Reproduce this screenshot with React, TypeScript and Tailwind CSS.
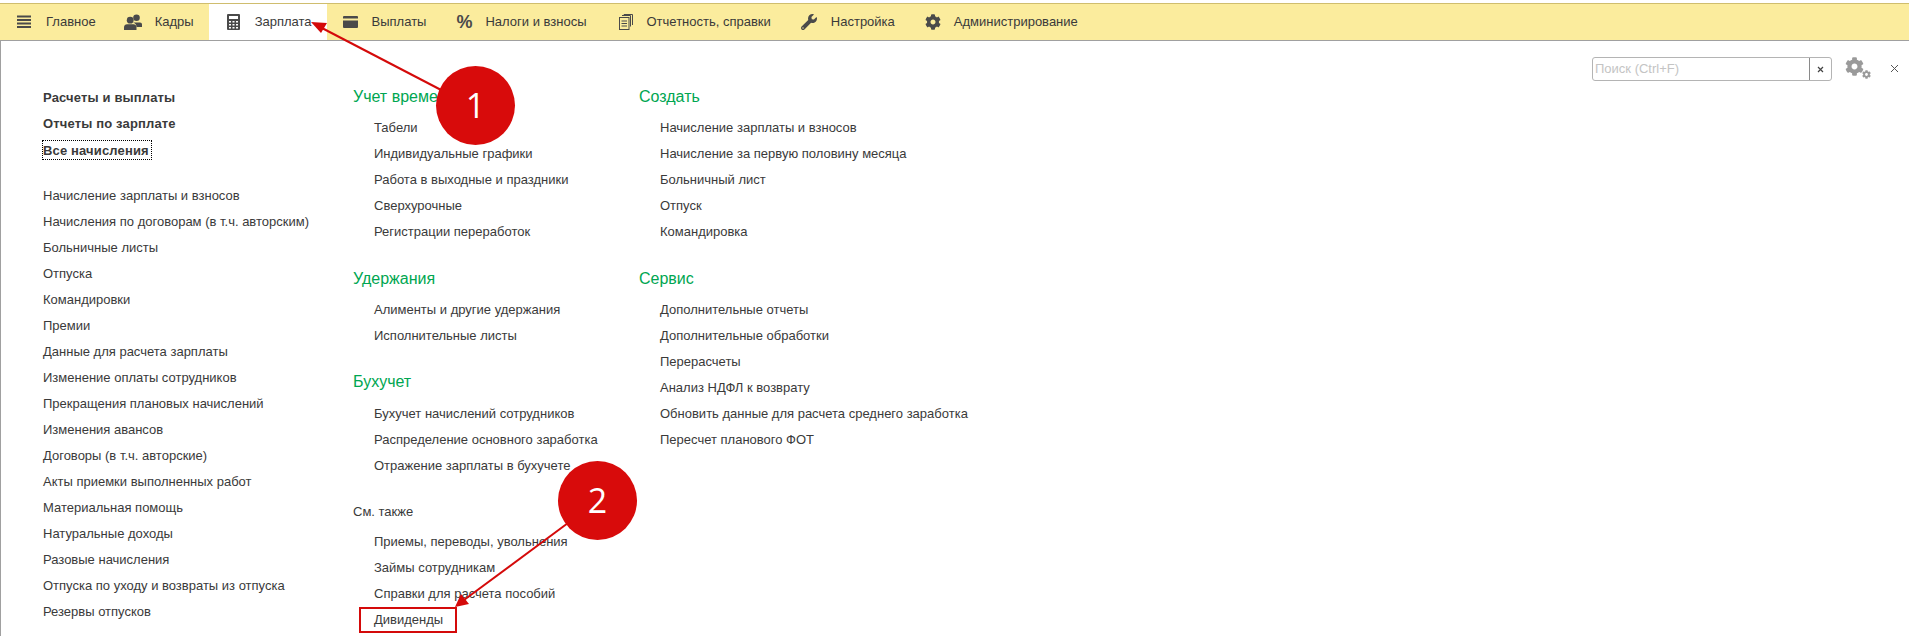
import { FaCog, FaWrench } from "react-icons/fa"

const IconCls = "w-[16px] h-[16px] text-[#4a4a4a]"

function MenuIcon() {
  return (
    <svg viewBox="0 0 14 14" className="w-[14px] h-[14px] text-[#4a4a4a]" fill="currentColor">
      <rect x="0" y="0.5" width="14" height="2" />
      <rect x="0" y="4" width="14" height="2" />
      <rect x="0" y="7.5" width="14" height="2" />
      <rect x="0" y="11" width="14" height="2" />
    </svg>
  )
}

function PeopleIcon() {
  return (
    <svg viewBox="0 0 18 16" className="w-[18px] h-[16px] text-[#4a4a4a]" fill="currentColor">
      <circle cx="12.5" cy="3.8" r="3.3" />
      <path d="M9 8.5h7c1.2 0 2 .9 2 2V13h-5.5c0-2-1-3.6-3.5-4.5z" />
      <circle cx="6.2" cy="6.2" r="3.4" />
      <path d="M0 16v-2.500c0-2 1.500-3.200 3-3.200h6.500c1.500 0 3 1.200 3 3.200V16z" />
    </svg>
  )
}

function CalcIcon() {
  return (
    <svg viewBox="0 0 13 16" className="w-[13px] h-[16px] text-[#4a4a4a]">
      <rect x="0" y="0" width="13" height="16" rx="1" fill="currentColor" />
      <rect x="2" y="2" width="9" height="3" fill="#fff" />
      <g fill="#fff">
        <rect x="2" y="7" width="2" height="1.500" />
        <rect x="5.500" y="7" width="2" height="1.500" />
        <rect x="9" y="7" width="2" height="1.500" />
        <rect x="2" y="10" width="2" height="1.500" />
        <rect x="5.500" y="10" width="2" height="1.500" />
        <rect x="9" y="10" width="2" height="1.500" />
        <rect x="2" y="13" width="2" height="1.500" />
        <rect x="5.500" y="13" width="2" height="1.500" />
        <rect x="9" y="13" width="2" height="1.500" />
      </g>
    </svg>
  )
}

function CardIcon() {
  return (
    <svg viewBox="0 0 15 12" className="w-[15px] h-[12px] text-[#4a4a4a]" fill="currentColor">
      <path d="M1 0h13a1 1 0 0 1 1 1v1.500H0V1a1 1 0 0 1 1-1z" />
      <path d="M0 4.500h15V11a1 1 0 0 1-1 1H1a1 1 0 0 1-1-1z" />
    </svg>
  )
}

function DocsIcon() {
  return (
    <svg viewBox="0 0 14 16" className="w-[14px] h-[16px] text-[#4a4a4a]" fill="none" stroke="currentColor" strokeWidth="1">
      <rect x="0.500" y="3.500" width="9.500" height="12" />
      <path d="M3 1.500h8.500V12.500M5 0h-.500M5 .500h8.500V11" />
      <path d="M2.500 7h5.500M2.500 9.500h5.500M2.500 12h5.500" />
    </svg>
  )
}

const navItems = [
  { label: "Главное", icon: <MenuIcon />, iconW: "w-[29px]", pl: "pl-[17px]", pr: "pr-[28px]" },
  { label: "Кадры", icon: <PeopleIcon />, iconW: "w-[31px]", pl: "pl-0", pr: "pr-[15px]" },
  { label: "Зарплата", icon: <CalcIcon />, iconW: "w-[28px]", pl: "pl-[18px]", pr: "pr-[15px]", active: true },
  { label: "Выплаты", icon: <CardIcon />, iconW: "w-[29px]", pl: "pl-[16px]", pr: "pr-[30px]" },
  {
    label: "Налоги и взносы",
    icon: <span className="text-[18px] font-bold text-[#4a4a4a] leading-none">%</span>,
    iconW: "w-[29px]",
    pl: "pl-0",
    pr: "pr-[32px]",
  },
  { label: "Отчетность, справки", icon: <DocsIcon />, iconW: "w-[28px]", pl: "pl-0", pr: "pr-[30px]" },
  { label: "Настройка", icon: <FaWrench className={IconCls} />, iconW: "w-[30px]", pl: "pl-0", pr: "pr-[30px]" },
  { label: "Администрирование", icon: <FaCog className={IconCls} />, iconW: "w-[29px]", pl: "pl-0", pr: "pr-0" },
]

const leftTop = ["Расчеты и выплаты", "Отчеты по зарплате"]

const leftLinks = [
  "Начисление зарплаты и взносов",
  "Начисления по договорам (в т.ч. авторским)",
  "Больничные листы",
  "Отпуска",
  "Командировки",
  "Премии",
  "Данные для расчета зарплаты",
  "Изменение оплаты сотрудников",
  "Прекращения плановых начислений",
  "Изменения авансов",
  "Договоры (в т.ч. авторские)",
  "Акты приемки выполненных работ",
  "Материальная помощь",
  "Натуральные доходы",
  "Разовые начисления",
  "Отпуска по уходу и возвраты из отпуска",
  "Резервы отпусков",
]

function Row({ children }: { children: React.ReactNode }) {
  return <div className="h-[26px] leading-[26px] whitespace-nowrap">{children}</div>
}

function Section({ title, items, className }: { title: string; items: string[]; className?: string }) {
  return (
    <section className={className}>
      <h2 className="h-[26px] leading-[26px] text-[16px] text-[#00a651] mb-[5px]">{title}</h2>
      <div className="pl-[21px]">
        {items.map((i) => (
          <Row key={i}>{i}</Row>
        ))}
      </div>
    </section>
  )
}

function Annotations() {
  return (
    <>
      <svg className="absolute left-0 top-0 pointer-events-none" width="1909" height="636" viewBox="0 0 1909 636">
        <line x1="445" y1="92" x2="320" y2="27" stroke="#d40a0a" strokeWidth="2" />
        <polygon points="311,22 327,23 321,33" fill="#d40a0a" />
        <line x1="568" y1="523" x2="464" y2="600" stroke="#d40a0a" strokeWidth="2" />
        <polygon points="455,607 461,594 469,604" fill="#d40a0a" />
      </svg>
      <div className="absolute left-[436px] top-[66px] w-[79px] h-[79px] rounded-full bg-[#d80b0b] text-white text-[34px] flex items-center justify-center font-['Open_Sans',sans-serif]">
        1
      </div>
      <div className="absolute left-[558px] top-[461px] w-[79px] h-[79px] rounded-full bg-[#d80b0b] text-white text-[34px] flex items-center justify-center font-['Open_Sans',sans-serif]">
        2
      </div>
      <div className="absolute left-[359px] top-[607px] w-[98px] h-[26px] border-2 border-[#d40a0a]" />
    </>
  )
}

export default function App() {
  return (
    <div className="relative h-[636px] w-[1909px] overflow-hidden bg-white font-['Liberation_Sans',Arial,sans-serif] text-[13px] text-[#3a3a3a]">
      {/* Top menu */}
      <div className="h-[41px] pt-[3px] bg-white">
        <nav className="flex h-[38px] border-t border-[#cfbd6e] border-b border-b-[#a0a0a0] bg-[#fbec9d]">
          {navItems.map((n) => (
            <div
              key={n.label}
              className={`flex items-center h-full ${n.pl} ${n.pr} ${n.active ? "bg-white" : ""}`}
            >
              <span className={`${n.iconW} flex items-center shrink-0`}>{n.icon}</span>
              <span className="whitespace-nowrap">{n.label}</span>
            </div>
          ))}
        </nav>
      </div>

      {/* Content */}
      <div className="flex h-[595px] border-l border-[#a0a0a0]">
        <div className="w-[352px] shrink-0 pl-[42px] pt-[44px]">
          <div className="font-bold tracking-[0.15px]">
            {leftTop.map((t) => (
              <Row key={t}>{t}</Row>
            ))}
            <div className="h-[26px] flex items-center">
              <span className="-ml-px border border-dotted border-black h-[20px] leading-[20px] pr-[2px]">Все начисления</span>
            </div>
          </div>
          <div className="mt-[20px]">
            {leftLinks.map((l) => (
              <Row key={l}>{l}</Row>
            ))}
          </div>
        </div>

        <div className="w-[286px] shrink-0 pt-[43px]">
          <Section
            title="Учет времени"
            items={["Табели", "Индивидуальные графики", "Работа в выходные и праздники", "Сверхурочные", "Регистрации переработок"]}
          />
          <Section
            className="mt-[21px]"
            title="Удержания"
            items={["Алименты и другие удержания", "Исполнительные листы"]}
          />
          <Section
            className="mt-[20px] [&>h2]:mb-[6px]"
            title="Бухучет"
            items={["Бухучет начислений сотрудников", "Распределение основного заработка", "Отражение зарплаты в бухучете"]}
          />
          <div className="mt-[20px]">
            <div className="h-[26px] leading-[26px] mb-[4px]">См. также</div>
            <div className="pl-[21px]">
              {["Приемы, переводы, увольнения", "Займы сотрудникам", "Справки для расчета пособий", "Дивиденды"].map((i) => (
                <Row key={i}>{i}</Row>
              ))}
            </div>
          </div>
        </div>

        <div className="w-[400px] shrink-0 pt-[43px]">
          <Section
            title="Создать"
            items={[
              "Начисление зарплаты и взносов",
              "Начисление за первую половину месяца",
              "Больничный лист",
              "Отпуск",
              "Командировка",
            ]}
          />
          <Section
            className="mt-[21px]"
            title="Сервис"
            items={[
              "Дополнительные отчеты",
              "Дополнительные обработки",
              "Перерасчеты",
              "Анализ НДФЛ к возврату",
              "Обновить данные для расчета среднего заработка",
              "Пересчет планового ФОТ",
            ]}
          />
        </div>

        {/* Search and page actions */}
        <div className="ml-auto flex items-start pt-[16px] pr-[10px]">
          <div className="flex h-[24px] w-[240px] border border-[#b4b4b4] rounded-[3px] text-[13px]">
            <span className="flex-1 pl-[2px] leading-[22px] text-[#c4c4c4]">Поиск (Ctrl+F)</span>
            <span className="w-[22px] border-l border-[#8a8a8a] flex items-center justify-center">
              <svg viewBox="0 0 7 7" className="w-[7px] h-[7px]" stroke="#444" strokeWidth="1.200">
                <path d="M1 1l5 5M6 1L1 6" />
              </svg>
            </span>
          </div>
          <div className="relative ml-[13px] w-[26px] h-[22px] text-[#9a9a9a]">
            <FaCog className="w-[19px] h-[19px]" />
            <FaCog className="absolute right-0 bottom-0 w-[9px] h-[9px]" />
          </div>
          <svg viewBox="0 0 9 9" className="w-[9px] h-[9px] ml-[19px] mt-[7px]" stroke="#555" strokeWidth="1">
            <path d="M1 1l7 7M8 1L1 8" />
          </svg>
        </div>
      </div>

      <Annotations />
    </div>
  )
}
